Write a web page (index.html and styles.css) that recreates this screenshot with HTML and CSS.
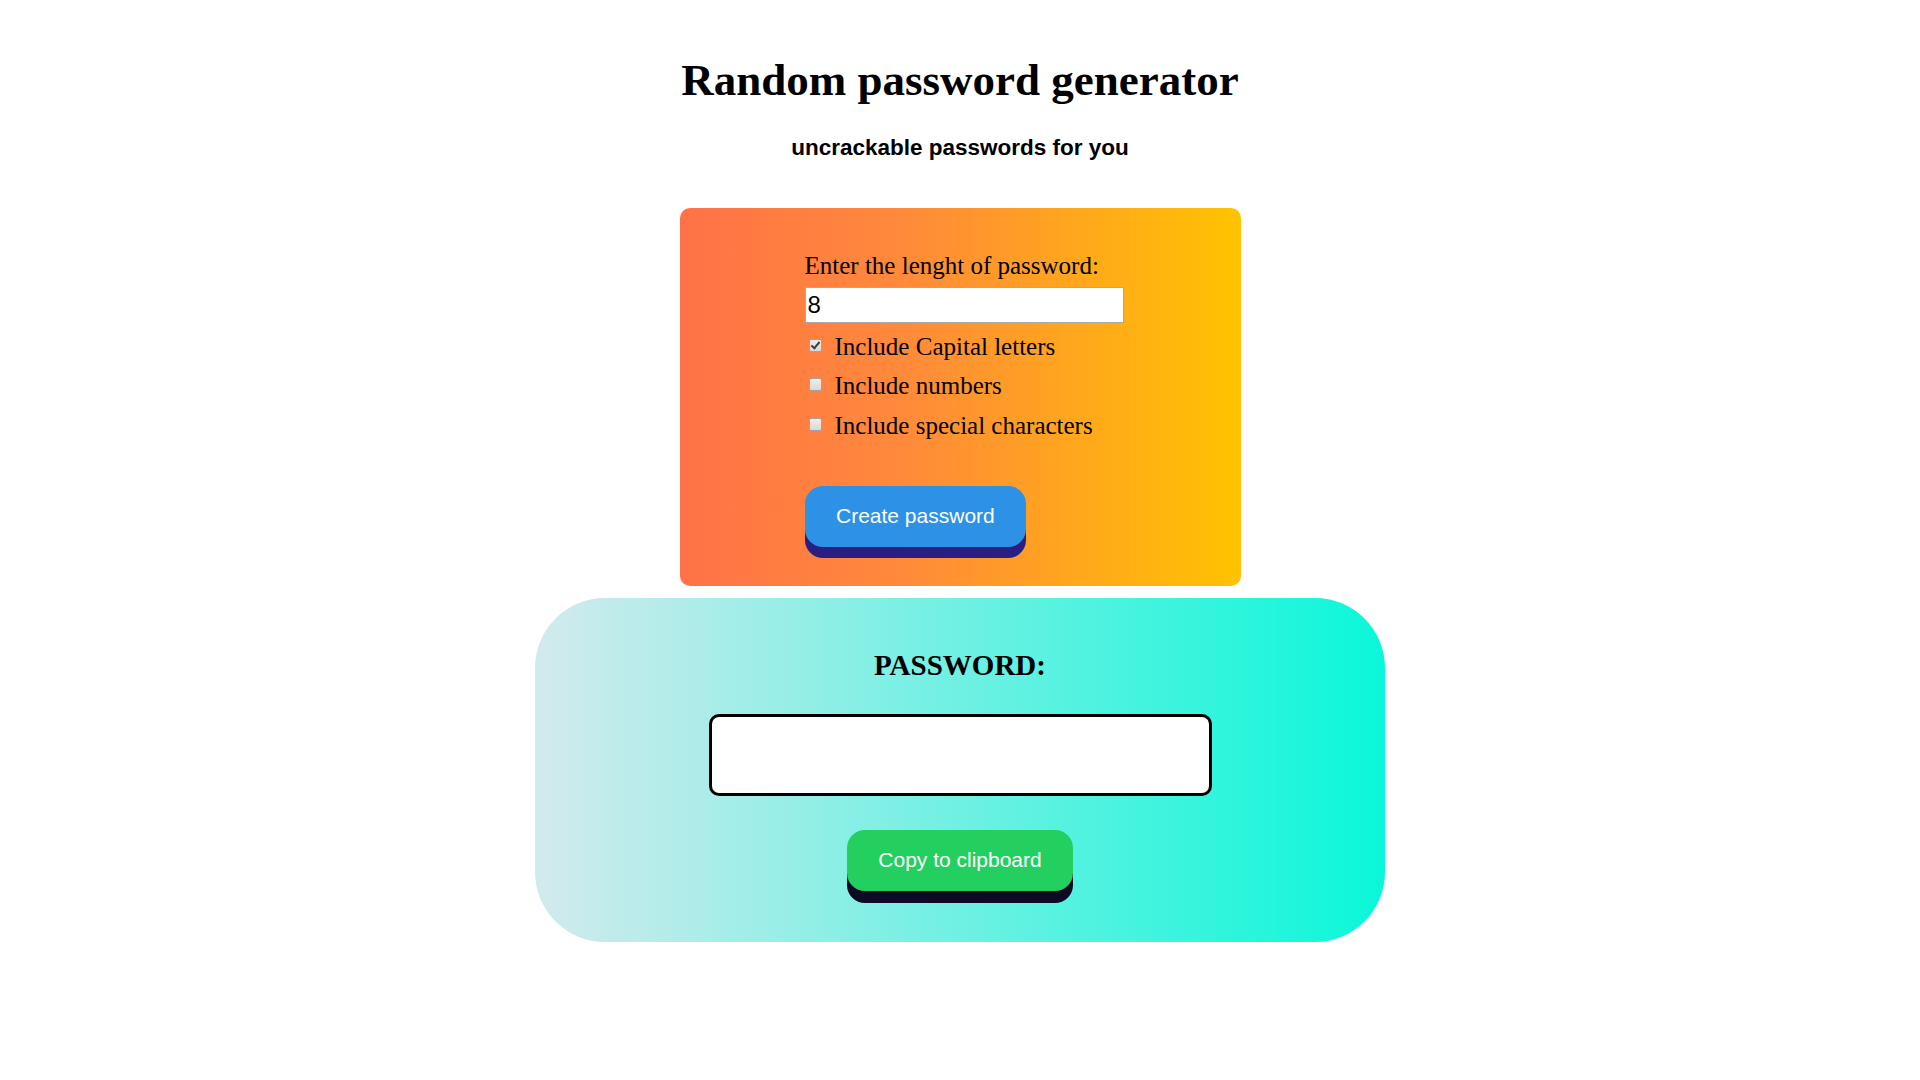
FILE: index.html
```html
<!DOCTYPE html>
<html lang="en">
<head>
<meta charset="utf-8">
<title>Random password generator</title>
<link rel="stylesheet" href="styles.css">
</head>
<body>
  <h1 class="title">Random password generator</h1>
  <p class="subtitle">uncrackable passwords for you</p>

  <section class="generator">
    <div class="form">
      <label class="field-label" for="length">Enter the lenght of password:</label>
      <input class="length-input" id="length" type="text" value="8">
      <div class="option"><input class="check" type="checkbox" id="caps" checked><label for="caps">Include Capital letters</label></div>
      <div class="option"><input class="check" type="checkbox" id="nums"><label for="nums">Include numbers</label></div>
      <div class="option"><input class="check" type="checkbox" id="special"><label for="special">Include special characters</label></div>
      <button class="btn btn-create" type="button">Create password</button>
    </div>
  </section>

  <section class="result">
    <h2 class="result-title">PASSWORD:</h2>
    <div class="password-box"></div>
    <button class="btn btn-copy" type="button">Copy to clipboard</button>
  </section>
</body>
</html>
```

FILE: styles.css
```css
html, body {
  margin: 0;
  padding: 0;
  background: #ffffff;
}

body {
  font-family: "Liberation Serif", "Times New Roman", serif;
  color: #000;
}

.title {
  margin: 54px 0 0;
  font-size: 45px;
  font-weight: bold;
  line-height: normal;
  text-align: center;
}

.subtitle {
  margin: 29px 0 0;
  font-family: "Liberation Sans", Arial, sans-serif;
  font-size: 22.5px;
  font-weight: bold;
  line-height: normal;
  text-align: center;
}

.generator {
  width: 561px;
  margin: 47px auto 0;
  box-sizing: border-box;
  padding: 44px 0 39px 125px;
  border-radius: 10px;
  background: linear-gradient(to right, #ff7248 0%, #ff8a3a 40%, #ffc300 100%);
}

.form {
  display: flex;
  flex-direction: column;
  align-items: flex-start;
}

.field-label {
  display: block;
  font-size: 25px;
  line-height: normal;
}

.length-input {
  display: block;
  box-sizing: border-box;
  width: 319px;
  height: 36px;
  margin: 7px 0 0;
  padding: 0 2px;
  border: 1px solid #a9a9a9;
  background: #fff;
  font-family: "Liberation Sans", Arial, sans-serif;
  font-size: 24px;
  color: #000;
  outline: none;
}

.option {
  font-size: 25px;
  line-height: normal;
  margin-top: 11.6px;
}

.length-input + .option {
  margin-top: 9.5px;
}

.check {
  -webkit-appearance: none;
  appearance: none;
  position: relative;
  width: 13px;
  height: 13px;
  margin: 3px 13px 3px 4px;
  box-sizing: border-box;
  border: 1px solid #a3a3a3;
  border-radius: 2px;
  background: linear-gradient(to bottom, #ededed, #d8d8d8);
  vertical-align: baseline;
}

.check:checked::after {
  content: "";
  position: absolute;
  left: 3.5px;
  top: 0.5px;
  width: 3px;
  height: 7px;
  border-right: 2px solid #404040;
  border-bottom: 2px solid #404040;
  transform: rotate(40deg);
}

.btn {
  display: block;
  box-sizing: border-box;
  border: none;
  border-radius: 18px;
  padding: 0 31.5px;
  font-family: "Liberation Sans", Arial, sans-serif;
  font-size: 21px;
  color: #ffffff;
  cursor: pointer;
}

.btn-create {
  height: 61px;
  margin-top: 46.3px;
  background: #2d91e5;
  box-shadow: 0 11px 0 #2a1f80;
}

.result {
  width: 850px;
  margin: 12px auto 0;
  box-sizing: border-box;
  padding: 51px 0 51px;
  border-radius: 70px;
  background: linear-gradient(to right, #d3eaed 0%, #0af7d9 100%);
  text-align: center;
}

.result-title {
  margin: 0;
  font-size: 29px;
  font-weight: bold;
  line-height: normal;
}

.password-box {
  box-sizing: border-box;
  width: 503px;
  height: 82px;
  margin: 32px auto 0;
  border: 3px solid #000;
  border-radius: 10px;
  background: #fff;
}

.btn-copy {
  height: 61px;
  margin: 34px auto 0;
  background: #22cf5f;
  box-shadow: 0 12px 0 #0d0a26;
}
```
